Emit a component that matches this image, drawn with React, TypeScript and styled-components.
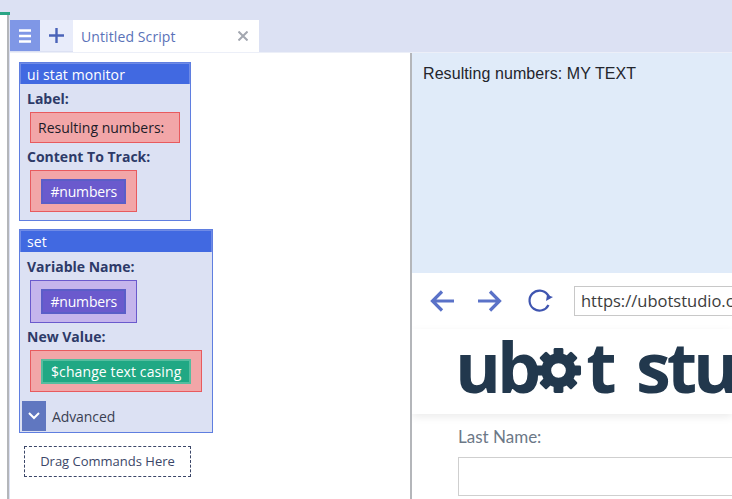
import styled, { createGlobalStyle } from 'styled-components'

const GlobalStyle = createGlobalStyle`
  html, body { margin: 0; padding: 0; background: #fff; }
  * { box-sizing: border-box; }
`

function Gear() {
  const teeth = [0, 45, 90, 135, 180, 225, 270, 315]
  return (
    <GearSvg viewBox="0 0 48 48">
      <circle cx="24" cy="24" r="12.5" fill="none" stroke="#22384d" strokeWidth="10" />
      {teeth.map(a => (
        <rect key={a} x="19" y="1" width="10" height="10" rx="1.5" fill="#22384d" transform={`rotate(${a} 24 24)`} />
      ))}
    </GearSvg>
  )
}

export default function App() {
  return (
    <Page>
      <GlobalStyle />
      <Rail>
        <RailLine />
        <RailBody />
      </Rail>
      <Main>
        <TabBar>
          <MenuButton>
            <svg width="12" height="14" viewBox="0 0 12 14">
              <path d="M0 1.5h12M0 7h12M0 12.5h12" stroke="#fff" strokeWidth="2.6" />
            </svg>
          </MenuButton>
          <PlusButton>
            <svg width="15" height="15" viewBox="0 0 15 15">
              <path d="M7.5 0v15M0 7.5h15" stroke="#4a63b8" strokeWidth="2.4" />
            </svg>
          </PlusButton>
          <Tab>
            <TabTitle>Untitled Script</TabTitle>
            <svg width="10" height="10" viewBox="0 0 10 10">
              <path d="M.5.5l9 9M9.5.5l-9 9" stroke="#a3a7b0" strokeWidth="2" />
            </svg>
          </Tab>
        </TabBar>
        <Body>
          <ScriptPane>
            <Block>
              <BlockHeader>ui stat monitor</BlockHeader>
              <BlockBody>
                <FieldLabel>Label:</FieldLabel>
                <TextSlot>Resulting numbers:</TextSlot>
                <FieldLabel>Content To Track:</FieldLabel>
                <Slot>
                  <Chip>#numbers</Chip>
                </Slot>
              </BlockBody>
            </Block>
            <Block>
              <BlockHeader $selected>set</BlockHeader>
              <BlockBody>
                <FieldLabel>Variable Name:</FieldLabel>
                <Slot $kind="variable">
                  <Chip>#numbers</Chip>
                </Slot>
                <FieldLabel>New Value:</FieldLabel>
                <Slot>
                  <Chip $kind="function">$change text casing</Chip>
                </Slot>
              </BlockBody>
              <AdvancedRow>
                <AdvancedButton>
                  <svg width="12" height="8" viewBox="0 0 12 8">
                    <path d="M1 1l5 5 5-5" fill="none" stroke="#fff" strokeWidth="2" />
                  </svg>
                </AdvancedButton>
                Advanced
              </AdvancedRow>
            </Block>
            <DropZone>Drag Commands Here</DropZone>
          </ScriptPane>
          <RightPane>
            <Monitor>Resulting numbers: MY TEXT</Monitor>
            <Browser>
              <NavRow>
                <NavIcon width="26" height="24" viewBox="0 0 26 24">
                  <path d="M24 12H4M12 2.5L2.5 12l9.5 9.5" fill="none" stroke="#5a72c8" strokeWidth="3.2" />
                </NavIcon>
                <NavIcon width="26" height="24" viewBox="0 0 26 24">
                  <path d="M2 12h20M14 2.5l9.5 9.5-9.5 9.5" fill="none" stroke="#5a72c8" strokeWidth="3.2" />
                </NavIcon>
                <ReloadIcon width="28" height="26" viewBox="0 0 28 26">
                  <path d="M21.5 17a10 10 0 1 1-1-10.5L23 10" fill="none" stroke="#3f55b0" strokeWidth="2.2" />
                  <path d="M26 9l-7 4 1-6z" fill="#3f55b0" />
                </ReloadIcon>
                <UrlBox>https://ubotstudio.com/</UrlBox>
              </NavRow>
              <LogoRow>
                <Logo>
                  ub
                  <Gear />
                  t stu
                </Logo>
              </LogoRow>
              <FormArea>
                <FormLabel>Last Name:</FormLabel>
                <FormInput />
              </FormArea>
            </Browser>
          </RightPane>
        </Body>
      </Main>
    </Page>
  )
}

const Page = styled.div`
  display: flex;
  width: 732px;
  height: 499px;
  overflow: hidden;
  background: #dce1f3;
  font-family: 'Open Sans', 'Noto Sans', sans-serif;
`
const Rail = styled.div`
  display: flex;
  flex-direction: column;
  flex: 0 0 10px;
  padding-top: 12px;
`
const RailLine = styled.div`
  height: 3px;
  background: #2aa585;
`
const RailBody = styled.div`
  flex: 1;
  width: 9px;
  background: #fff;
  border-right: 2px solid #b4b6ba;
`
const Main = styled.div`
  display: flex;
  flex-direction: column;
  flex: 1;
  min-width: 0;
`
const TabBar = styled.div`
  display: flex;
  height: 53px;
  padding-top: 20px;
  border-bottom: 1px solid #eceff8;
`
const MenuButton = styled.div`
  display: flex;
  align-items: center;
  justify-content: center;
  width: 30px;
  height: 31px;
  background: #7f97e6;
`
const PlusButton = styled.div`
  display: flex;
  align-items: center;
  justify-content: center;
  width: 33px;
  height: 31px;
  background: #e8ecfa;
`
const Tab = styled.div`
  display: flex;
  align-items: center;
  justify-content: space-between;
  width: 186px;
  height: 32px;
  padding: 0 11px 0 8px;
  background: #fff;
`
const TabTitle = styled.span`
  font-size: 14px;
  letter-spacing: 0.1px;
  color: #5a72b8;
`
const Body = styled.div`
  display: flex;
  flex: 1;
  min-height: 0;
  background: #fff;
`
const ScriptPane = styled.div`
  display: flex;
  flex-direction: column;
  align-items: flex-start;
  gap: 8px;
  flex: 0 0 402px;
  padding: 9px 0 0 9px;
  background: #fff;
  border-right: 2px solid #b4b6ba;
`
const Block = styled.div`
  background: #dce1f3;
  border: 1px solid #5f7ee0;
`
const BlockHeader = styled.div<{ $selected?: boolean }>`
  height: ${p => (p.$selected ? '22px' : '21px')};
  padding-left: 6px;
  font-size: 14px;
  line-height: 22px;
  letter-spacing: 0.1px;
  color: #fff;
  background: #4169e1;
  border: 1px solid #6f8be6;
  border-bottom: none;
`
const BlockBody = styled.div`
  display: flex;
  flex-direction: column;
  align-items: flex-start;
  padding: 1px 10px 8px 7px;
`
const FieldLabel = styled.div`
  height: 17px;
  margin-top: 6px;
  margin-bottom: 4px;
  font-size: 14px;
  font-weight: 700;
  line-height: 16px;
  color: #2d3a68;
`
const Slot = styled.div<{ $kind?: 'variable' }>`
  margin-left: 3px;
  padding: ${p => (p.$kind === 'variable' ? '8px 10px' : '8px 10px 7px')};
  background: ${p => (p.$kind === 'variable' ? '#c5b5ec' : '#f2a6a8')};
  border: 1px solid ${p => (p.$kind === 'variable' ? '#6a5acd' : '#e85a5e')};
`
const TextSlot = styled(Slot)`
  height: 31px;
  padding: 0 15px 0 7px;
  font-size: 14px;
  line-height: 29px;
  color: #1c1c28;
`
const Chip = styled.div<{ $kind?: 'function' }>`
  height: 25px;
  padding: 0 ${p => (p.$kind === 'function' ? '8px' : '7.5px')};
  font-size: 14px;
  line-height: 21px;
  letter-spacing: ${p => (p.$kind === 'function' ? '0.1px' : '-0.2px')};
  color: #fff;
  background: ${p => (p.$kind === 'function' ? '#20a884' : '#6a5acd')};
  border: 2px solid ${p => (p.$kind === 'function' ? '#55bd9f' : '#5a5ec8')};
`
const AdvancedRow = styled.div`
  display: flex;
  align-items: center;
  gap: 6px;
  margin-top: 1px;
  padding: 0 0 1px 2px;
  font-size: 14px;
  letter-spacing: -0.1px;
  color: #3a3f52;
`
const AdvancedButton = styled.div`
  display: flex;
  align-items: center;
  justify-content: center;
  width: 24px;
  height: 30px;
  background: #6077c0;
`
const DropZone = styled.div`
  width: 167px;
  height: 31px;
  margin: 5px 0 0 5px;
  font-size: 13px;
  line-height: 29px;
  text-align: center;
  color: #3b4668;
  border: 1px dashed #3b4668;
`
const RightPane = styled.div`
  display: flex;
  flex-direction: column;
  flex: 1;
  min-width: 0;
`
const Monitor = styled.div`
  height: 220px;
  padding: 11px 0 0 11px;
  font-family: 'Liberation Sans', Arial, sans-serif;
  font-size: 16px;
  line-height: 20px;
  letter-spacing: 0.08px;
  color: #23252c;
  background: #e0ebf9;
`
const Browser = styled.div`
  display: flex;
  flex-direction: column;
  flex: 1;
  min-height: 0;
  overflow: hidden;
  background: #fff;
`
const NavRow = styled.div`
  display: flex;
  align-items: center;
  height: 56px;
  padding: 0 0 0 18px;
`
const NavIcon = styled.svg`
  flex: none;
  margin-right: 20px;
`
const ReloadIcon = styled.svg`
  flex: none;
  margin: 0 19px 0 5px;
`
const UrlBox = styled.div`
  flex: none;
  width: 300px;
  height: 30px;
  padding-left: 6px;
  font-size: 16.5px;
  line-height: 28px;
  color: #3c3c3c;
  border: 1px solid #c8c8c8;
`
const LogoRow = styled.div`
  height: 85px;
  padding-left: 43px;
  box-shadow: 0 3px 8px rgba(0, 0, 0, 0.08);
`
const Logo = styled.div`
  display: flex;
  align-items: baseline;
  font-size: 70px;
  font-weight: 700;
  line-height: 74px;
  letter-spacing: -4px;
  word-spacing: 9px;
  white-space: pre;
  color: #22384d;
`
const GearSvg = styled.svg`
  flex: none;
  width: 47px;
  height: 47px;
  margin: 0 4px 0 -2px;
  transform: translateY(1px);
`
const FormArea = styled.div`
  padding: 13px 0 0 46px;
`
const FormLabel = styled.div`
  font-family: Lato, sans-serif;
  font-size: 17px;
  line-height: 20px;
  color: #6c7887;
`
const FormInput = styled.div`
  width: 300px;
  height: 39px;
  margin-top: 10px;
  border: 1px solid #cfcfcf;
`
